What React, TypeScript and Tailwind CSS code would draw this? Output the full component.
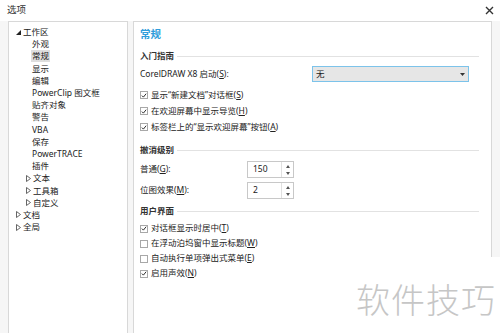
import React from 'react';

const font = { fontFamily: '"Noto Sans", "Noto Sans CJK SC", sans-serif' };

type TreeItem = { label: string; level: number; arrow?: 'open' | 'closed'; selected?: boolean };

const tree: TreeItem[] = [
  { label: '工作区', level: 0, arrow: 'open' },
  { label: '外观', level: 1 },
  { label: '常规', level: 1, selected: true },
  { label: '显示', level: 1 },
  { label: '编辑', level: 1 },
  { label: 'PowerClip 图文框', level: 1 },
  { label: '贴齐对象', level: 1 },
  { label: '警告', level: 1 },
  { label: 'VBA', level: 1 },
  { label: '保存', level: 1 },
  { label: 'PowerTRACE', level: 1 },
  { label: '插件', level: 1 },
  { label: '文本', level: 1, arrow: 'closed' },
  { label: '工具箱', level: 1, arrow: 'closed' },
  { label: '自定义', level: 1, arrow: 'closed' },
  { label: '文档', level: 0, arrow: 'closed' },
  { label: '全局', level: 0, arrow: 'closed' },
];

// underline the access key inside "(X)"
function Label({ text }: { text: string }) {
  const m = text.match(/^(.*)\((.)\)(.*)$/);
  if (!m) return <span>{text}</span>;
  return (
    <span>
      {m[1]}(<span className="underline underline-offset-[1px]">{m[2]}</span>){m[3]}
    </span>
  );
}

function Arrow({ kind }: { kind: 'open' | 'closed' }) {
  if (kind === 'open') {
    return (
      <svg width="5" height="5" viewBox="0 0 5 5" className="mr-[1px]">
        <polygon points="5,0 5,5 0,5" fill="#222" />
      </svg>
    );
  }
  return (
    <svg width="5" height="7" viewBox="0 0 5 7" className="mr-[1px]">
      <polygon points="0.5,0.5 4.5,3.5 0.5,6.5" fill="none" stroke="#555" strokeWidth="0.9" />
    </svg>
  );
}

function TreeRow({ item }: { item: TreeItem }) {
  const indent = item.level === 0 ? 'pl-[7px]' : item.arrow ? 'pl-[17px]' : 'pl-[22px]';
  return (
    <div className={`flex items-center h-[12.2px] ${indent}`}>
      {item.arrow && <Arrow kind={item.arrow} />}
      <span className={`px-[1px] leading-[12px] ${item.selected ? 'bg-[#dedede]' : ''}`}>{item.label}</span>
    </div>
  );
}

function SectionTitle({ title, className }: { title: string; className: string }) {
  return (
    <div className={`flex items-center h-[12px] pr-[12px] ${className}`}>
      <span className="font-semibold text-[#333]">{title}</span>
      <div className="flex-1 h-px bg-[#e2e2e2] ml-[3px]" />
    </div>
  );
}

function Check({ label, checked }: { label: string; checked: boolean }) {
  return (
    <div className="flex items-center h-full">
      <div className="w-[8px] h-[8px] border border-[#a8a8a8] bg-white flex items-center justify-center mr-[3px]">
        {checked && (
          <svg width="7" height="7" viewBox="0 0 7 7">
            <polyline points="1,3.6 2.8,5.4 6,1.4" fill="none" stroke="#222" strokeWidth="1.1" />
          </svg>
        )}
      </div>
      <Label text={label} />
    </div>
  );
}

function Spin({ value }: { value: string }) {
  return (
    <div className="flex w-[47px] h-full border border-[#c8c8c8] bg-white">
      <div className="flex-1 flex items-center pl-[5px]">{value}</div>
      <div className="w-[12px] border-l border-[#e0e0e0] flex flex-col items-center justify-center gap-[4px]">
        <svg width="4" height="3" viewBox="0 0 4 3"><polygon points="0,3 4,3 2,0" fill="#555" /></svg>
        <svg width="4" height="3" viewBox="0 0 4 3"><polygon points="0,0 4,0 2,3" fill="#555" /></svg>
      </div>
    </div>
  );
}

export default function App() {
  return (
    <div className="relative w-[500px] h-[333px] overflow-hidden bg-[#f6f6f6] text-[8.5px] text-[#222]" style={font}>
      {/* Title bar */}
      <div className="flex items-center justify-between h-[21px] pl-[7px] pr-[6px] bg-white">
        <span className="text-[9.5px] text-[#333]">选项</span>
        <svg width="9" height="9" viewBox="0 0 9 9">
          <path d="M1 1 L8 8 M8 1 L1 8" stroke="#333" strokeWidth="1.4" />
        </svg>
      </div>

      <div className="flex h-[312px] pl-[8px] pr-[8px] gap-[5px]">
        {/* Tree */}
        <div className="w-[120px] h-[330px] bg-white border border-[#d8d8d8] pt-[4px]">
          {tree.map((t) => (
            <TreeRow key={t.label} item={t} />
          ))}
        </div>

        {/* Settings */}
        <div className="flex-1 h-[330px] bg-white border border-[#d8d8d8] pl-[6px] flex flex-col">
          <div className="h-[14px] mt-[6px] flex items-center text-[10.5px] font-semibold text-[#2f9ddb]">常规</div>

          <SectionTitle title="入门指南" className="mt-[8px]" />
          <div className="flex items-center h-[16px] mt-[4px]">
            <span className="w-[172px]"><Label text="CorelDRAW X8 启动(S):" /></span>
            <div className="w-[157px] h-full bg-[#e6e6e6] border border-[#7cc3ea] flex items-center justify-between px-[3px]">
              <span>无</span>
              <svg width="5" height="3" viewBox="0 0 5 3"><polygon points="0,0 5,0 2.5,3" fill="#333" /></svg>
            </div>
          </div>
          <div className="h-[16px] mt-[5px]"><Check label="显示“新建文档”对话框(S)" checked /></div>
          <div className="h-[16px]"><Check label="在欢迎屏幕中显示导览(H)" checked /></div>
          <div className="h-[16px]"><Check label="标签栏上的“显示欢迎屏幕”按钮(A)" checked /></div>

          <SectionTitle title="撤消级别" className="mt-[9px]" />
          <div className="flex items-center h-[17px] mt-[5px]">
            <span className="w-[107px]"><Label text="普通(G):" /></span>
            <Spin value="150" />
          </div>
          <div className="flex items-center h-[17px] mt-[4px]">
            <span className="w-[107px]"><Label text="位图效果(M):" /></span>
            <Spin value="2" />
          </div>

          <SectionTitle title="用户界面" className="mt-[6px]" />
          <div className="h-[15px] mt-[4px]"><Check label="对话框显示时居中(T)" checked /></div>
          <div className="h-[15px]"><Check label="在浮动泊坞窗中显示标题(W)" checked={false} /></div>
          <div className="h-[15px]"><Check label="自动执行单项弹出式菜单(E)" checked={false} /></div>
          <div className="h-[15px]"><Check label="启用声效(N)" checked /></div>
        </div>
      </div>

      {/* Watermark */}
      <div className="absolute right-0 bottom-0 w-[158px] h-[76px] bg-white flex items-center justify-end pr-[4px] pt-[8px]">
        <span className="text-[34px] leading-none text-[#c6c6c6] tracking-[1px]" style={{ fontFamily: '"Noto Sans CJK SC", sans-serif', fontWeight: 300 }}>
          软件技巧
        </span>
      </div>
    </div>
  );
}
